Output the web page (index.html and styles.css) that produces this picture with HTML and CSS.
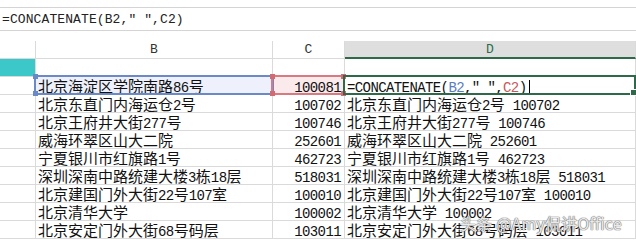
FILE: index.html
```html
<!DOCTYPE html>
<html lang="zh-CN">
<head>
	<meta charset="UTF-8">
	<title>CONCATENATE</title>
	<link rel="stylesheet" href="styles.css">
</head>
<body>

<div class="fbar">=CONCATENATE(B2,″ ″,C2)</div>
<div class="gap"></div>

<div class="sheet">
	<div class="c rh"></div>
	<div class="c hd">B</div>
	<div class="c hd">C</div>
	<div class="c hd hd-on">D</div>

	<div class="c rh rh-on"></div>
	<div class="c"></div>
	<div class="c"></div>
	<div class="c"></div>

	<div class="c rh"></div>
	<div class="c txt sel-b">北京海淀区学院南路<span class="a">86</span>号</div>
	<div class="c num sel-c"><span class="a">100081</span></div>
	<div class="c txt"><span class="a">=CONCATENATE(<span class="ref-b">B2</span>,″ ″,<span class="ref-c">C2</span>)</span><i class="caret"></i></div>

	<div class="c rh"></div>
	<div class="c txt">北京东直门内海运仓<span class="a">2</span>号</div>
	<div class="c num"><span class="a">100702</span></div>
	<div class="c txt">北京东直门内海运仓<span class="a">2</span>号<span class="a"> 100702</span></div>

	<div class="c rh"></div>
	<div class="c txt">北京王府井大街<span class="a">277</span>号</div>
	<div class="c num"><span class="a">100746</span></div>
	<div class="c txt">北京王府井大街<span class="a">277</span>号<span class="a"> 100746</span></div>

	<div class="c rh"></div>
	<div class="c txt">威海环翠区山大二院</div>
	<div class="c num"><span class="a">252601</span></div>
	<div class="c txt">威海环翠区山大二院<span class="a"> 252601</span></div>

	<div class="c rh"></div>
	<div class="c txt">宁夏银川市红旗路<span class="a">1</span>号</div>
	<div class="c num"><span class="a">462723</span></div>
	<div class="c txt">宁夏银川市红旗路<span class="a">1</span>号<span class="a"> 462723</span></div>

	<div class="c rh"></div>
	<div class="c txt">深圳深南中路统建大楼<span class="a">3</span>栋<span class="a">18</span>层</div>
	<div class="c num"><span class="a">518031</span></div>
	<div class="c txt">深圳深南中路统建大楼<span class="a">3</span>栋<span class="a">18</span>层<span class="a"> 518031</span></div>

	<div class="c rh"></div>
	<div class="c txt">北京建国门外大街<span class="a">22</span>号<span class="a">107</span>室</div>
	<div class="c num"><span class="a">100010</span></div>
	<div class="c txt">北京建国门外大街<span class="a">22</span>号<span class="a">107</span>室<span class="a"> 100010</span></div>

	<div class="c rh"></div>
	<div class="c txt">北京清华大学</div>
	<div class="c num"><span class="a">100002</span></div>
	<div class="c txt">北京清华大学<span class="a"> 100002</span></div>

	<div class="c rh"></div>
	<div class="c txt">北京安定门外大街<span class="a">68</span>号码层</div>
	<div class="c num"><span class="a">103011</span></div>
	<div class="c txt">北京安定门外大街<span class="a">68</span>号码层<span class="a"> 103011</span></div>

	<!-- 选区框 -->
	<div class="box box-b"><i class="dot t l"></i><i class="dot b l"></i></div>
	<div class="box box-c"><i class="dot t l"></i><i class="dot b l"></i><i class="dot t r"></i><i class="dot b r"></i></div>
	<div class="box box-d"><i class="handle"></i></div>

	<div class="mark">头条 @Amy侃讲Office</div>
</div>

</body>
</html>
```

FILE: styles.css
```css
body{
	margin: 0;
	width: 636px;
	height: 240px;
	overflow: hidden;
	background: #fff;
	font-family: "Noto Sans CJK SC", sans-serif;
	color: #111;
}

.fbar{
	margin-top: 7px;
	height: 22px;
	border-top: 1px solid #d4d4d4;
	border-bottom: 1px solid #d4d4d4;
	padding-left: 2px;
	font-family: "Liberation Mono", monospace;
	font-size: 13px;
	line-height: 23px;
	letter-spacing: 0.1px;
	color: #222;
}
.gap{
	height: 10px;
}

.sheet{
	position: relative;
	display: grid;
	grid-template-columns: 36px 237px 72px 291px;
	grid-auto-rows: 18px;
}
.c{
	box-sizing: border-box;
	border-right: 1px solid #dadada;
	border-bottom: 1px solid #dadada;
	font-size: 15px;
	line-height: 17px;
	white-space: nowrap;
}
.a{
	font-family: "Liberation Mono", monospace;
	font-size: 14px;
	letter-spacing: -0.6px;
}

.hd{
	text-align: center;
	font-family: "Liberation Mono", monospace;
	font-size: 13px;
	line-height: 18px;
	color: #333;
}
.hd-on{
	background: #dedede;
	color: #2e6a4a;
	border-bottom: 2px solid #2e6a4a;
}
.rh-on{
	background: #3cc8c8;
}
.txt{
	padding-left: 2px;
}
.num{
	text-align: right;
	padding-right: 3px;
}
.sel-b{
	background: #eef1fb;
}
.sel-c{
	background: #fbeaeb;
}
.ref-b{
	color: #5a7cc0;
}
.ref-c{
	color: #c9585d;
}
.caret{
	display: inline-block;
	width: 1px;
	height: 15px;
	margin-left: 3px;
	vertical-align: -3px;
	background: #000;
}

.box{
	position: absolute;
	box-sizing: border-box;
	border: 2px solid;
}
.box-b{
	left: 34px;
	top: 34px;
	width: 240px;
	height: 20px;
	border-color: #6b89c6;
}
.box-c{
	left: 271px;
	top: 34px;
	width: 74px;
	height: 20px;
	border-color: #d97a80;
}
.box-d{
	left: 343px;
	top: 34px;
	width: 293px;
	height: 20px;
	border-color: #2e6a4a;
}
.dot{
	position: absolute;
	width: 5px;
	height: 5px;
}
.box-b .dot{
	background: #6b89c6;
}
.box-c .dot{
	background: #d46a71;
}
.dot.t{ top: -3px; }
.dot.b{ bottom: -3px; }
.dot.l{ left: -3px; }
.dot.r{ right: -3px; }
.handle{
	position: absolute;
	right: -3px;
	bottom: -3px;
	width: 5px;
	height: 5px;
	background: #2e6a4a;
	border: 1px solid #fff;
}

.mark{
	position: absolute;
	left: 460px;
	top: 170px;
	font-size: 16px;
	color: rgba(255,255,255,0.85);
	text-shadow: 0 0 1px #777, 0 0 1px #777, 0 0 1px #777;
	letter-spacing: 0.2px;
}
```
